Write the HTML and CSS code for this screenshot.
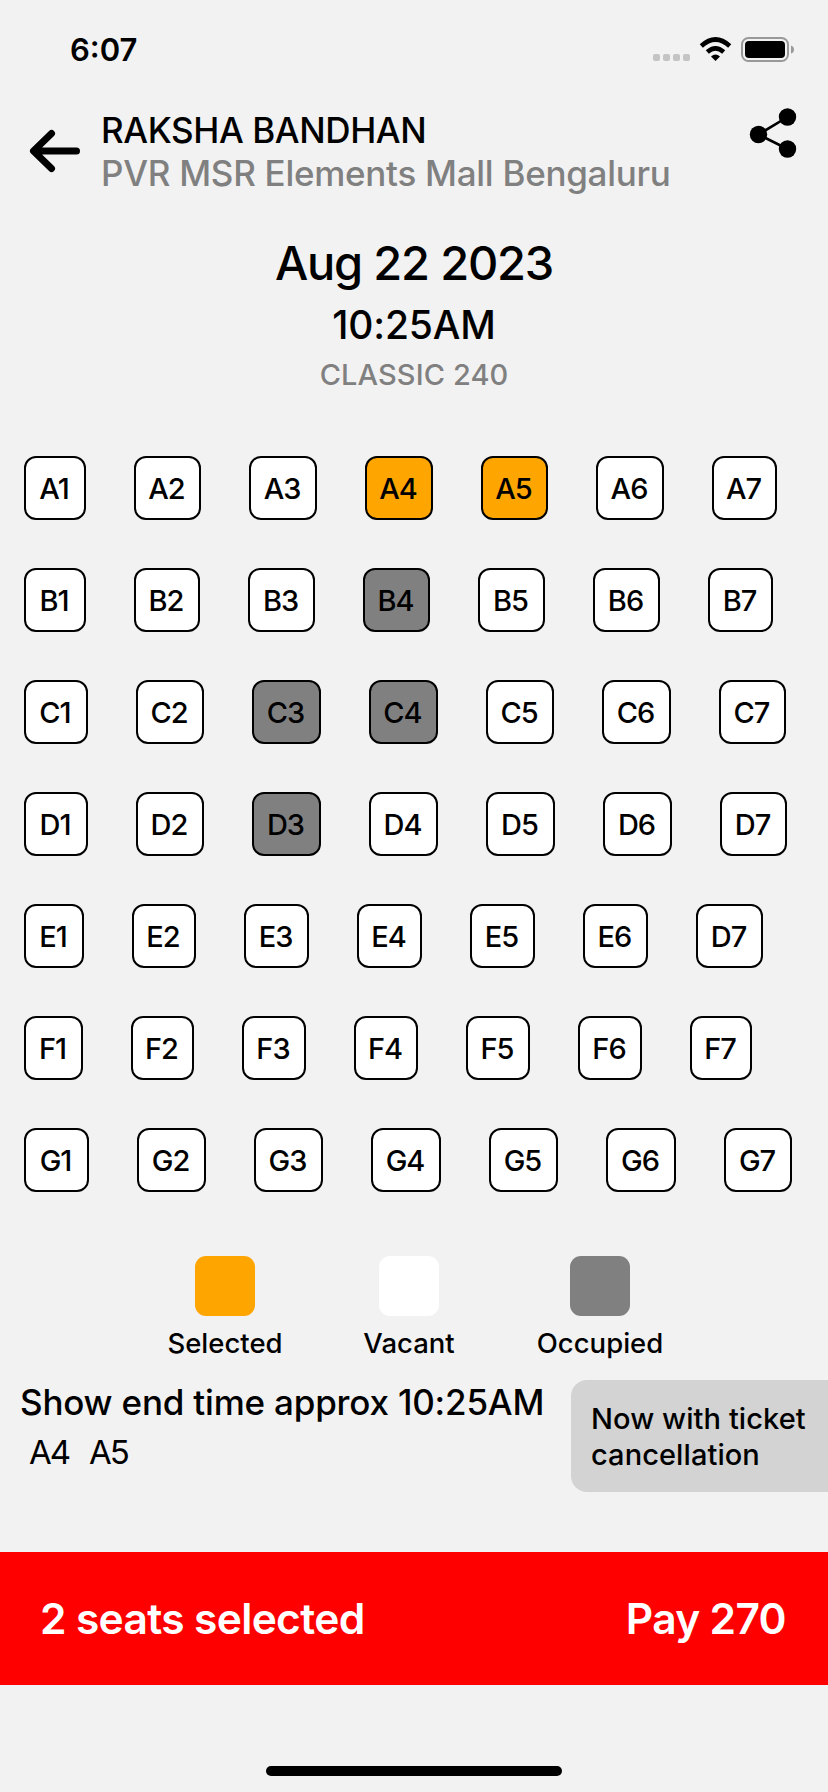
FILE: index.html
```
<!DOCTYPE html>
<html lang="en">
<head>
<meta charset="utf-8">
<title>Select seats</title>
<link rel="stylesheet" href="styles.css">
</head>
<body>
<div class="status">
  <span class="clock">6:07</span>
  <svg class="status-icons" width="144" height="28" viewBox="652 36 144 28">
    <g fill="#c4c4c4"><rect x="653" y="54" width="7" height="7" rx="2"/><rect x="663" y="54" width="7" height="7" rx="2"/><rect x="673" y="54" width="7" height="7" rx="2"/><rect x="683" y="54" width="7" height="7" rx="2"/></g>
    <path d="M701.3 46Q715.5 33 729.7 46M707.300 52Q715.5 44.800 723.700 52" fill="none" stroke="#000" stroke-width="4.6"/>
    <path d="M715.5 61L711 56.600Q715.5 52.600 720 56.600Z"/>
    <rect x="742" y="38" width="46" height="23" rx="6.5" fill="none" stroke="#999" stroke-width="2"/>
    <rect x="745" y="41" width="40" height="17" rx="4"/>
    <path d="M791 45.5Q794 46.5 794 49.5Q794 52.5 791 53.5Z" fill="#999"/>
  </svg>
</div>
<header class="top">
  <svg class="back" width="52" height="44" viewBox="29 129 52 44" fill="none" stroke="#000" stroke-width="7" stroke-linecap="round" stroke-linejoin="round"><path d="M51.500 133.500L33.500 151L51.500 168.500M34 151H76.500"/></svg>
  <div class="heading">
    <h1 class="title">RAKSHA BANDHAN</h1>
    <p class="venue">PVR MSR Elements Mall Bengaluru</p>
  </div>
  <svg class="share" width="48" height="52" viewBox="749 107 48 52"><path d="M787.500 117L758.500 134.500L787.500 149" fill="none" stroke="#000" stroke-width="2.600"/><circle cx="787.500" cy="117" r="8.700"/><circle cx="758.500" cy="134.500" r="8.700"/><circle cx="787.500" cy="149" r="8.700"/></svg>
</header>
<section class="show">
  <p class="date">Aug 22 2023</p>
  <p class="time">10:25AM</p>
  <p class="class">CLASSIC 240</p>
</section>
<main class="seats">
  <div class="row"><span class="seat w62">A1</span><span class="seat w67">A2</span><span class="seat w68">A3</span><span class="seat w68 selected">A4</span><span class="seat w67 selected">A5</span><span class="seat w68">A6</span><span class="seat w65">A7</span></div>
  <div class="row"><span class="seat w62">B1</span><span class="seat w66">B2</span><span class="seat w67">B3</span><span class="seat w67 occupied">B4</span><span class="seat w67">B5</span><span class="seat w67">B6</span><span class="seat w65">B7</span></div>
  <div class="row"><span class="seat w64">C1</span><span class="seat w68">C2</span><span class="seat w69 occupied">C3</span><span class="seat w69 occupied">C4</span><span class="seat w68">C5</span><span class="seat w69">C6</span><span class="seat w67">C7</span></div>
  <div class="row"><span class="seat w64">D1</span><span class="seat w68">D2</span><span class="seat w69 occupied">D3</span><span class="seat w69">D4</span><span class="seat w69">D5</span><span class="seat w69">D6</span><span class="seat w67">D7</span></div>
  <div class="row"><span class="seat w60">E1</span><span class="seat w64">E2</span><span class="seat w65">E3</span><span class="seat w65">E4</span><span class="seat w65">E5</span><span class="seat w65">E6</span><span class="seat w67">D7</span></div>
  <div class="row"><span class="seat w59">F1</span><span class="seat w63">F2</span><span class="seat w64">F3</span><span class="seat w64">F4</span><span class="seat w64">F5</span><span class="seat w64">F6</span><span class="seat w62">F7</span></div>
  <div class="row"><span class="seat w65">G1</span><span class="seat w69">G2</span><span class="seat w69">G3</span><span class="seat w70">G4</span><span class="seat w69">G5</span><span class="seat w70">G6</span><span class="seat w68">G7</span></div>
</main>
<section class="legend">
  <div class="key"><i class="swatch orange"></i><span>Selected</span></div>
  <div class="key"><i class="swatch white"></i><span>Vacant</span></div>
  <div class="key"><i class="swatch gray"></i><span>Occupied</span></div>
</section>
<section class="info">
  <div class="summary">
    <p class="ends">Show end time approx 10:25AM</p>
    <p class="picked"><span>A4</span><span>A5</span></p>
  </div>
  <p class="note">Now with ticket<br>cancellation</p>
</section>
<footer class="pay"><span class="count">2 seats selected</span><span class="amount">Pay 270</span></footer>
<div class="home"></div>
</body>
</html>
```
FILE: styles.css
```
* { box-sizing: border-box; margin: 0; padding: 0; }
body { width: 828px; height: 1792px; display: flex; flex-direction: column; background: #f2f2f2; color: #000; font-family: Inter, "Liberation Sans", sans-serif; font-weight: 500; overflow: hidden; white-space: nowrap; }
svg { display: block; flex: none; }
.status { height: 100px; flex: none; display: flex; justify-content: space-between; align-items: flex-start; padding: 30px 32px 0 70px; }
.clock { font-size: 31px; line-height: 40px; font-weight: 600; }
.status-icons { margin-top: 6px; }
.top { height: 120px; flex: none; display: flex; align-items: flex-start; padding: 7px 31px 0 29px; }
.back { margin-top: 22px; }
.heading { flex: 1; padding: 2px 0 0 20px; }
.title, .venue { font-size: 35px; line-height: 43px; font-weight: 500; }
.title { letter-spacing: -0.4px; }
.venue { color: #808080; letter-spacing: -0.28px; }
.show { height: 236px; flex: none; padding-top: 14px; text-align: center; }
.date { font-size: 47px; line-height: 58px; letter-spacing: -1.2px; }
.time { font-size: 39px; line-height: 48px; margin-top: 9px; letter-spacing: -0.15px; }
.class { font-size: 29px; line-height: 36px; margin-top: 8px; color: #808080; letter-spacing: 0.1px; }
.seats { flex: none; display: flex; flex-direction: column; gap: 48px; padding-left: 24px; }
.row { display: flex; gap: 48px; }
.seat { height: 64px; flex: none; display: flex; align-items: center; justify-content: center; border: 2px solid #000; border-radius: 12px; background: #fff; font-size: 29px; letter-spacing: -1px; padding: 1px 2px 0 0; }
.selected { background: #ffa500; }
.occupied { background: #808080; }
.w59 { width: 59px; } .w60 { width: 60px; } .w62 { width: 62px; } .w63 { width: 63px; }
.w64 { width: 64px; } .w65 { width: 65px; } .w66 { width: 66px; } .w67 { width: 67px; }
.w68 { width: 68px; } .w69 { width: 69px; } .w70 { width: 70px; }
.legend { height: 124px; flex: none; display: grid; grid-template-columns: 116px 88px 130px; gap: 82px; padding-left: 167px; margin-top: 64px; }
.key { display: flex; flex-direction: column; align-items: center; font-size: 27.5px; line-height: 34px; }
.swatch { width: 60px; height: 60px; flex: none; border-radius: 11px; margin-bottom: 10px; }
.orange { background: #ffa500; }
.white { background: #fff; }
.gray { background: #808080; }
.info { height: 172px; flex: none; display: flex; justify-content: space-between; align-items: flex-start; padding-left: 20px; }
.summary { padding-top: 1px; }
.ends { font-size: 35px; line-height: 43px; letter-spacing: -0.2px; }
.picked { display: flex; gap: 20px; padding-left: 9px; margin-top: 8px; font-size: 33px; line-height: 40px; font-weight: 400; letter-spacing: -2px; }
.note { width: 257px; height: 112px; border-radius: 16px 0 0 16px; background: #d3d3d3; padding: 21px 0 0 20px; font-size: 29px; line-height: 36px; letter-spacing: 0.08px; }
.pay { height: 133px; flex: none; display: flex; align-items: center; justify-content: space-between; padding: 0 42px 0 40px; background: #f00; color: #fff; font-size: 42.5px; font-weight: 600; letter-spacing: -0.65px; }
.home { width: 296px; height: 10px; flex: none; margin: 81px auto 0; border-radius: 5px; background: #000; }
```
